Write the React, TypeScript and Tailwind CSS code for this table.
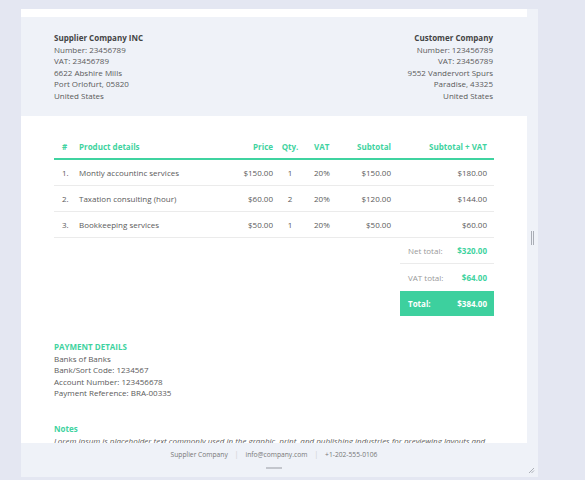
const items = [
    { n: '1.', name: 'Montly accountinc services', price: '$150.00', qty: 1, vat: '20%', sub: '$150.00', total: '$180.00' },
    { n: '2.', name: 'Taxation consulting (hour)', price: '$60.00', qty: 2, vat: '20%', sub: '$120.00', total: '$144.00' },
    { n: '3.', name: 'Bookkeeping services', price: '$50.00', qty: 1, vat: '20%', sub: '$50.00', total: '$60.00' },
]

const cols = 'grid grid-cols-[25px_150px_44px_34px_38px_46px_103px]'

const App = () => {
    return (
        <div className="min-h-screen bg-[#e4e7f2] pt-[9px] pl-[21px] font-['Open_Sans',sans-serif] text-[8px] leading-[11.6px] text-[#5a5a5a]">
            <div className="w-[517px] h-[468px] bg-[#eff2f8] flex flex-col relative">
                <div className="flex flex-1 min-h-0">
                    <div className="w-[506px] bg-white overflow-hidden">
                        <div className="h-2"></div>
                        <div className="bg-[#eff2f8] pt-[15px] pb-[14px] pl-[33px] pr-[34px] flex justify-between h-[99px]">
                            <div>
                                <p className="font-bold text-[#444]">Supplier Company INC</p>
                                <p>Number: 23456789</p>
                                <p>VAT: 23456789</p>
                                <p>6622 Abshire Mills</p>
                                <p>Port Orlofurt, 05820</p>
                                <p>United States</p>
                            </div>
                            <div className="text-right">
                                <p className="font-bold text-[#444]">Customer Company</p>
                                <p>Number: 123456789</p>
                                <p>VAT: 23456789</p>
                                <p>9552 Vandervort Spurs</p>
                                <p>Paradise, 43325</p>
                                <p>United States</p>
                            </div>
                        </div>

                        <div className="px-[33px] mt-[19px]">
                            <div className={`${cols} h-[25px] items-center border-b-2 border-[#3fd3a0] font-bold text-[#3fd3a0]`}>
                                <span className="pl-2">#</span>
                                <span>Product details</span>
                                <span className="text-right">Price</span>
                                <span className="text-center">Qty.</span>
                                <span className="pl-[7px]">VAT</span>
                                <span className="text-right">Subtotal</span>
                                <span className="text-right pr-[7px]">Subtotal + VAT</span>
                            </div>
                            {items.map((item) => (
                                <div key={item.n} className={`${cols} h-[26px] items-center border-b border-[#ebebeb]`}>
                                    <span className="pl-2">{item.n}</span>
                                    <span>{item.name}</span>
                                    <span className="text-right">{item.price}</span>
                                    <span className="text-center">{item.qty}</span>
                                    <span className="pl-[7px]">{item.vat}</span>
                                    <span className="text-right">{item.sub}</span>
                                    <span className="text-right pr-[7px]">{item.total}</span>
                                </div>
                            ))}

                            <div className="flex justify-end">
                                <div className="w-[94px]">
                                    <div className="flex justify-between items-center h-[26px] border-b border-[#ebebeb] pl-2 pr-[7px]">
                                        <span className="text-[#999]">Net total:</span>
                                        <span className="font-bold text-[#3fd3a0]">$320.00</span>
                                    </div>
                                    <div className="flex justify-between items-center h-[27px] pl-2 pr-[7px]">
                                        <span className="text-[#999]">VAT total:</span>
                                        <span className="font-bold text-[#3fd3a0]">$64.00</span>
                                    </div>
                                    <div className="flex justify-between items-center h-[25px] bg-[#3dd09e] pl-2 pr-[7px] font-bold text-white">
                                        <span>Total:</span>
                                        <span>$384.00</span>
                                    </div>
                                </div>
                            </div>

                            <div className="mt-[25px]">
                                <p className="font-bold text-[#3fd3a0]">PAYMENT DETAILS</p>
                                <p>Banks of Banks</p>
                                <p>Bank/Sort Code: 1234567</p>
                                <p>Account Number: 123456678</p>
                                <p>Payment Reference: BRA-00335</p>
                            </div>

                            <div className="mt-[24px]">
                                <p className="font-bold text-[#3fd3a0]">Notes</p>
                                <p className="italic">
                                    Lorem ipsum is placeholder text commonly used in the graphic, print, and publishing industries for previewing layouts and visual mockups.
                                </p>
                            </div>
                        </div>
                    </div>
                    <div className="flex-1 flex items-start justify-center pt-[222px]">
                        <div className="flex gap-[1px]">
                            <div className="w-[1px] h-[14px] bg-[#a9adb5]"></div>
                            <div className="w-[1px] h-[14px] bg-[#a9adb5]"></div>
                        </div>
                    </div>
                </div>
                <div className="h-[34px] w-[506px] flex flex-col items-center">
                    <div className="mt-[7px] flex items-center gap-[7px] text-[6.7px] leading-[10px] text-[#777]">
                        <span>Supplier Company</span>
                        <span className="text-[#ccc]">|</span>
                        <span>info@company.com</span>
                        <span className="text-[#ccc]">|</span>
                        <span>+1-202-555-0106</span>
                    </div>
                    <div className="mt-[7px] w-4 h-[2px] bg-[#c3c6cd]"></div>
                </div>
                <svg className="absolute right-[3px] bottom-[3px]" width="7" height="7" viewBox="0 0 7 7">
                    <path d="M6 1 L1 6 M6 3.5 L3.5 6" stroke="#9a9ea6" strokeWidth="0.8" />
                </svg>
            </div>
        </div>
    )
}

export default App
